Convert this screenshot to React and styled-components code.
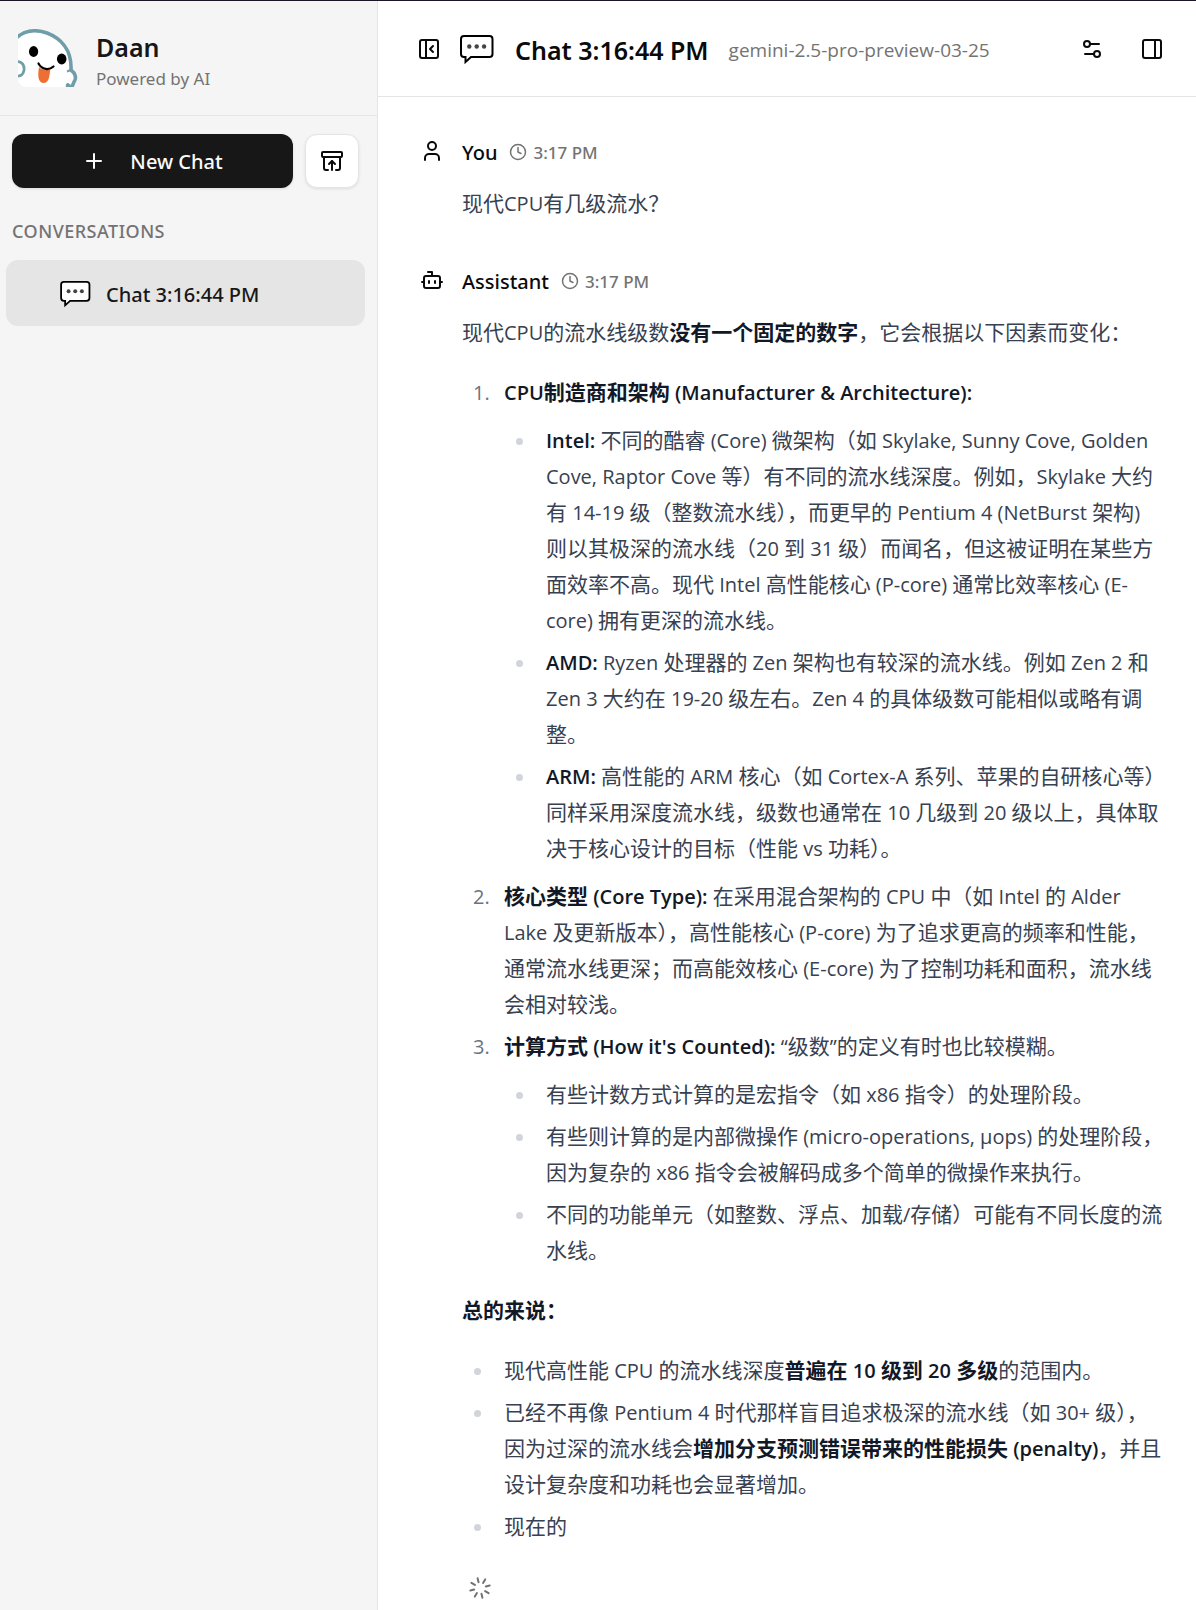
import React from 'react';
import styled, { createGlobalStyle } from 'styled-components';
import {
  ArchiveRestore,
  Bot,
  Clock,
  Loader,
  PanelLeftClose,
  PanelRight,
  Plus,
  Settings2,
  User,
} from 'lucide-react';

const GlobalStyle = createGlobalStyle`
  *, *::before, *::after {
    box-sizing: border-box;
  }

  body {
    margin: 0;
    background: #fff;
    color: #0a0a0a;
    font-family: 'Noto Sans', 'Noto Sans CJK SC', sans-serif;
  }

  button {
    font: inherit;
    color: inherit;
    cursor: pointer;
  }

  h1, h2, p, ul, ol {
    margin: 0;
  }
`;

const Page = styled.div`
  display: grid;
  grid-template-columns: 378px minmax(0, 1fr);
  min-height: 100vh;
  border-top: 1px solid #1b1524;
`;

/* Sidebar */

const Sidebar = styled.aside`
  background: #f5f5f5;
  border-right: 1px solid #e5e5e5;
`;

const Brand = styled.header`
  display: flex;
  align-items: center;
  gap: 18px;
  height: 115px;
  padding: 0 18px;
  border-bottom: 1px solid #e5e5e5;
`;

const BrandText = styled.div`
  padding-top: 8px;
`;

const BrandName = styled.h1`
  font-size: 25px;
  font-weight: 600;
  line-height: 34px;
  color: #171717;
`;

const BrandNote = styled.p`
  font-size: 17px;
  line-height: 30px;
  color: #737373;
`;

const Actions = styled.div`
  display: flex;
  gap: 12px;
  padding: 18px 18px 0 12px;
`;

const NewChatButton = styled.button`
  flex: 1;
  display: flex;
  align-items: center;
  justify-content: center;
  gap: 24px;
  height: 54px;
  border: none;
  border-radius: 12px;
  background: #171717;
  color: #fafafa;
  font-size: 20px;
  font-weight: 500;
  box-shadow: 0 1px 3px rgba(0, 0, 0, 0.1);
`;

const ArchiveButton = styled.button`
  display: flex;
  align-items: center;
  justify-content: center;
  width: 54px;
  height: 54px;
  padding: 0;
  border: 1px solid #e5e5e5;
  border-radius: 12px;
  background: #fff;
  box-shadow: 0 1px 3px rgba(0, 0, 0, 0.1);
`;

const SectionTitle = styled.h2`
  padding: 31px 12px 17px;
  font-size: 18px;
  font-weight: 500;
  line-height: 24px;
  letter-spacing: 0.5px;
  color: #737373;
`;

const ConversationLink = styled.a`
  display: flex;
  align-items: center;
  gap: 15px;
  height: 66px;
  margin: 0 12px 0 6px;
  padding: 3px 54px 0;
  border-radius: 12px;
  background: #e5e5e5;
  color: #171717;
  font-size: 20px;
  font-weight: 500;
  text-decoration: none;
`;

/* Chat */

const TopBar = styled.header`
  display: flex;
  align-items: center;
  height: 96px;
  padding: 0 32px 0 39px;
  border-bottom: 1px solid #e5e5e5;
`;

const IconButton = styled.button`
  display: flex;
  padding: 0;
  border: none;
  background: none;
`;

const ChatHeading = styled.div`
  flex: 1;
  display: flex;
  align-items: center;
  margin-left: 19px;
  padding-top: 3px;
`;

const ChatTitle = styled.h2`
  margin: 0 20px 0 21px;
  font-size: 25px;
  font-weight: 600;
`;

const ModelName = styled.span`
  font-family: 'Open Sans', sans-serif;
  font-size: 19px;
  color: #737373;
`;

const Tools = styled.div`
  display: flex;
  gap: 36px;
`;

const Messages = styled.main`
  padding: 36px 30px 0 42px;
`;

const Message = styled.article`
  display: grid;
  grid-template-columns: 24px minmax(0, 1fr);
  column-gap: 18px;

  & + & {
    margin-top: 41px;
  }
`;

const RoleIcon = styled.div`
  padding-top: 6px;
`;

const MessageHead = styled.div`
  display: flex;
  align-items: center;
  gap: 12px;
  height: 38px;
`;

const Author = styled.span`
  font-size: 20px;
  font-weight: 500;
`;

const Time = styled.time`
  display: flex;
  align-items: center;
  gap: 6px;
  font-size: 17px;
  font-weight: 500;
  color: #737373;
`;

const Prose = styled.div`
  padding-top: 14px;
  font-family: 'Open Sans', 'Noto Sans CJK SC', sans-serif;
  font-size: 21px;
  line-height: 36px;
  color: #374151;

  > * + * {
    margin-top: 24px;
  }

  strong {
    font-weight: 600;
    color: #111827;
  }
`;

const Latin = styled.span`
  font-size: 20px;
  line-height: 1;
`;

const OrderedList = styled.ol`
  padding-left: 33px;

  > li::marker {
    font-size: 20px;
    color: #6b7280;
  }
`;

const BulletList = styled.ul`
  padding-left: 33px;
  list-style: disc;

  li > & {
    margin: 12px 0;
  }

  > li::marker {
    color: #d1d5db;
  }
`;

const Item = styled.li`
  padding-left: 9px;

  & + & {
    margin-top: 6px;
  }
`;

const Waiting = styled.div`
  display: flex;
  padding: 8px 0 0 6px;
  color: #737373;

  svg {
    transform: rotate(-14deg);
  }
`;

// Latin runs are set one step smaller than the Chinese text around them
function Mixed({ children }) {
  return children
    .split(/([\x20-\x7eµ“”]+)/)
    .filter(Boolean)
    .map((part, i) => (/^[\x20-\x7eµ“”]/.test(part) ? <Latin key={i}>{part}</Latin> : part));
}

function Strong({ children }) {
  return (
    <strong>
      <Mixed>{children}</Mixed>
    </strong>
  );
}

function Avatar() {
  return (
    <svg width="60" height="58" viewBox="0 0 60 58" aria-hidden="true">
      <defs>
        <clipPath id="avatar-clip">
          <path d="M0 0H60V58H8a8 8 0 0 1-8-8Z" />
        </clipPath>
      </defs>
      <g clipPath="url(#avatar-clip)">
        <path
          d="M-3 10C6 1 18 0 29 4C42 9 54 20 53 41C57 44 59 49 56 53L53 60H-3Z"
          fill="#fff"
          stroke="#6f9eaa"
          strokeWidth="3.6"
        />
        <path d="M49 42.5L54 40.5" stroke="#6f9eaa" strokeWidth="2" />
        <path d="M-1 32.5C4 32.5 6.5 36 6 41C5.500 45 3 47.5-1 47" fill="none" stroke="#6f9eaa" strokeWidth="2.8" />
        <path d="M48 59C47 55 49 53 51 54.5L54 57V59Z" fill="#6f9eaa" />
        <path d="M21 38C23 40.5 29 42 32.5 40C31.5 44 32 53.5 26 54C20 54 19.5 47 21 38Z" fill="#ee6f33" />
        <path d="M20.5 34.5C24 41 31 41.5 35.5 37.5" fill="none" stroke="#000" strokeWidth="2.2" strokeLinecap="round" />
        <ellipse cx="15.6" cy="22.5" rx="4.6" ry="5.4" />
        <ellipse cx="43.7" cy="30" rx="4.8" ry="5.4" />
      </g>
    </svg>
  );
}

function ChatBubble({ width, height }) {
  return (
    <svg width={width} height={height} viewBox="0 0 34 30" aria-hidden="true">
      <path
        d="M4 1H29.5a3 3 0 0 1 3 3V19a3 3 0 0 1-3 3H11L5.5 27V22H4a3 3 0 0 1-3-3V4a3 3 0 0 1 3-3Z"
        fill="#fff"
        stroke="#000"
        strokeWidth="2"
      />
      <g fill="#444">
        <circle cx="9.3" cy="11.5" r="2.2" />
        <circle cx="16.7" cy="11.5" r="2.2" />
        <circle cx="24.1" cy="11.5" r="2.2" />
      </g>
    </svg>
  );
}

function MessageBlock({ icon: Icon, author, time, children }) {
  return (
    <Message>
      <RoleIcon>
        <Icon size={24} />
      </RoleIcon>
      <div>
        <MessageHead>
          <Author>{author}</Author>
          <Time>
            <Clock size={18} />
            {time}
          </Time>
        </MessageHead>
        <Prose>{children}</Prose>
      </div>
    </Message>
  );
}

function App() {
  return (
    <Page lang="zh-CN">
      <GlobalStyle />
      <Sidebar>
        <Brand>
          <Avatar />
          <BrandText>
            <BrandName>Daan</BrandName>
            <BrandNote>Powered by AI</BrandNote>
          </BrandText>
        </Brand>
        <Actions>
          <NewChatButton type="button">
            <Plus size={24} />
            New Chat
          </NewChatButton>
          <ArchiveButton type="button" aria-label="Archived chats">
            <ArchiveRestore size={24} />
          </ArchiveButton>
        </Actions>
        <SectionTitle>CONVERSATIONS</SectionTitle>
        <nav>
          <ConversationLink href="#chat">
            <ChatBubble width={31} height={27} />
            Chat 3:16:44 PM
          </ConversationLink>
        </nav>
      </Sidebar>

      <div>
        <TopBar>
          <IconButton type="button" aria-label="Close sidebar">
            <PanelLeftClose size={24} />
          </IconButton>
          <ChatHeading>
            <ChatBubble width={34} height={30} />
            <ChatTitle>Chat 3:16:44 PM</ChatTitle>
            <ModelName>gemini-2.5-pro-preview-03-25</ModelName>
          </ChatHeading>
          <Tools>
            <IconButton type="button" aria-label="Chat settings">
              <Settings2 size={24} />
            </IconButton>
            <IconButton type="button" aria-label="Open side panel">
              <PanelRight size={24} />
            </IconButton>
          </Tools>
        </TopBar>

        <Messages>
          <MessageBlock icon={User} author="You" time="3:17 PM">
            <p>
              <Mixed>现代CPU有几级流水？</Mixed>
            </p>
          </MessageBlock>

          <MessageBlock icon={Bot} author="Assistant" time="3:17 PM">
            <p>
              <Mixed>现代CPU的流水线级数</Mixed>
              <Strong>没有一个固定的数字</Strong>
              <Mixed>，它会根据以下因素而变化：</Mixed>
            </p>
            <OrderedList>
              <Item>
                <Strong>{'CPU制造商和架构 (Manufacturer & Architecture):'}</Strong>
                <BulletList>
                  <Item>
                    <Strong>Intel:</Strong>
                    <Mixed>
                      {' 不同的酷睿 (Core) 微架构（如 Skylake, Sunny Cove, Golden Cove, Raptor Cove 等）有不同的流水线深度。例如，Skylake 大约有 14-19 级（整数流水线），而更早的 Pentium 4 (NetBurst 架构) 则以其极深的流水线（20 到 31 级）而闻名，但这被证明在某些方面效率不高。现代 Intel 高性能核心 (P-core) 通常比效率核心 (E-core) 拥有更深的流水线。'}
                    </Mixed>
                  </Item>
                  <Item>
                    <Strong>AMD:</Strong>
                    <Mixed>
                      {' Ryzen 处理器的 Zen 架构也有较深的流水线。例如 Zen 2 和 Zen 3 大约在 19-20 级左右。Zen 4 的具体级数可能相似或略有调整。'}
                    </Mixed>
                  </Item>
                  <Item>
                    <Strong>ARM:</Strong>
                    <Mixed>
                      {' 高性能的 ARM 核心（如 Cortex-A 系列、苹果的自研核心等）同样采用深度流水线，级数也通常在 10 几级到 20 级以上，具体取决于核心设计的目标（性能 vs 功耗）。'}
                    </Mixed>
                  </Item>
                </BulletList>
              </Item>
              <Item>
                <Strong>核心类型 (Core Type):</Strong>
                <Mixed>
                  {' 在采用混合架构的 CPU 中（如 Intel 的 Alder Lake 及更新版本），高性能核心 (P-core) 为了追求更高的频率和性能，通常流水线更深；而高能效核心 (E-core) 为了控制功耗和面积，流水线会相对较浅。'}
                </Mixed>
              </Item>
              <Item>
                <Strong>{"计算方式 (How it's Counted):"}</Strong>
                <Mixed>{' “级数”的定义有时也比较模糊。'}</Mixed>
                <BulletList>
                  <Item>
                    <Mixed>有些计数方式计算的是宏指令（如 x86 指令）的处理阶段。</Mixed>
                  </Item>
                  <Item>
                    <Mixed>
                      有些则计算的是内部微操作 (micro-operations, µops) 的处理阶段，因为复杂的 x86 指令会被解码成多个简单的微操作来执行。
                    </Mixed>
                  </Item>
                  <Item>
                    <Mixed>不同的功能单元（如整数、浮点、加载/存储）可能有不同长度的流水线。</Mixed>
                  </Item>
                </BulletList>
              </Item>
            </OrderedList>
            <p>
              <Strong>总的来说：</Strong>
            </p>
            <BulletList>
              <Item>
                <Mixed>现代高性能 CPU 的流水线深度</Mixed>
                <Strong>普遍在 10 级到 20 多级</Strong>
                <Mixed>的范围内。</Mixed>
              </Item>
              <Item>
                <Mixed>已经不再像 Pentium 4 时代那样盲目追求极深的流水线（如 30+ 级），因为过深的流水线会</Mixed>
                <Strong>增加分支预测错误带来的性能损失 (penalty)</Strong>
                <Mixed>，并且设计复杂度和功耗也会显著增加。</Mixed>
              </Item>
              <Item>
                <Mixed>现在的</Mixed>
              </Item>
            </BulletList>
            <Waiting role="status" aria-label="Generating">
              <Loader size={24} />
            </Waiting>
          </MessageBlock>
        </Messages>
      </div>
    </Page>
  );
}

export default App;
